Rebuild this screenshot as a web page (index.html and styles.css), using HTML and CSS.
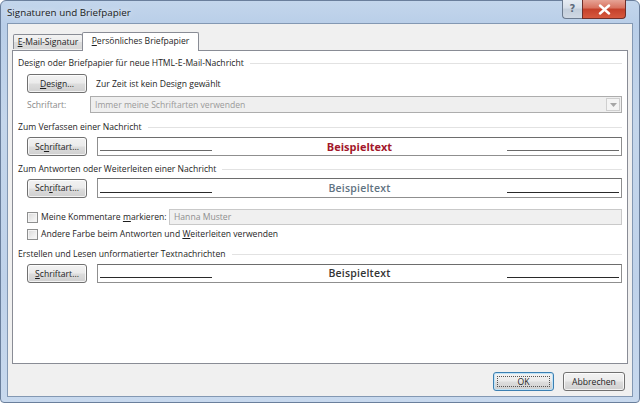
FILE: index.html
```html
<!DOCTYPE html>
<html lang="de">
<head>
<meta charset="utf-8">
<title>Signaturen und Briefpapier</title>
<link rel="stylesheet" href="styles.css">
</head>
<body>
<div class="window">
  <div class="titlebar">
    <span class="title">Signaturen und Briefpapier</span>
    <div class="caption-btns">
      <div class="cap-help">?</div>
      <div class="cap-close">
        <svg width="13" height="11" viewBox="0 0 13 11"><path d="M2 1.5 L11 9.5 M11 1.5 L2 9.5" stroke="#fff" stroke-width="2.4" stroke-linecap="round"/></svg>
      </div>
    </div>
  </div>
  <div class="client">
    <div class="tabs">
      <div class="tab"><u>E</u>-Mail-Signatur</div>
      <div class="tab active"><u>P</u>ersönliches Briefpapier</div>
    </div>
    <div class="panel">
      <div class="group-head g1">Design oder Briefpapier für neue HTML-E-Mail-Nachricht</div>
      <div class="row r-design">
        <div class="btn"><u>D</u>esign...</div>
        <span class="info">Zur Zeit ist kein Design gewählt</span>
      </div>
      <div class="row r-font">
        <span class="lbl-dis">Schriftart:</span>
        <div class="combo">
          <span>Immer meine Schriftarten verwenden</span>
          <div class="combo-arrow"><svg width="7" height="4" viewBox="0 0 7 4"><path d="M0 0 L7 0 L3.5 4 Z" fill="#a6a6a6"/></svg></div>
        </div>
      </div>
      <div class="group-head g2">Zum Verfassen einer Nachricht</div>
      <div class="row r-prev1">
        <div class="btn">Sc<u>h</u>riftart...</div>
        <div class="preview"><i class="pl"></i><span class="sample red">Beispieltext</span><i class="pl"></i></div>
      </div>
      <div class="group-head g3">Zum Antworten oder Weiterleiten einer Nachricht</div>
      <div class="row r-prev2">
        <div class="btn">Sch<u>r</u>iftart...</div>
        <div class="preview"><i class="pl dark"></i><span class="sample slate">Beispieltext</span><i class="pl dark"></i></div>
      </div>
      <div class="row r-check1">
        <span class="chk"></span>
        <span class="chk-lbl">Meine Kommentare <u>m</u>arkieren:</span>
        <div class="name-box">Hanna Muster</div>
      </div>
      <div class="row r-check2">
        <span class="chk"></span>
        <span class="chk-lbl">Andere Farbe beim Antworten und <u>W</u>eiterleiten verwenden</span>
      </div>
      <div class="group-head g4">Erstellen und Lesen unformatierter Textnachrichten</div>
      <div class="row r-prev3">
        <div class="btn"><u>S</u>chriftart...</div>
        <div class="preview"><i class="pl dark"></i><span class="sample plain">Beispieltext</span><i class="pl dark"></i></div>
      </div>
    </div>
    <div class="footer">
      <div class="btn btn-ok"><span class="focus">OK</span></div>
      <div class="btn btn-cancel">Abbrechen</div>
    </div>
  </div>
</div>
</body>
</html>
```
FILE: styles.css
```css
html, body {
  margin: 0;
  padding: 0;
}
body {
  width: 640px;
  height: 403px;
  overflow: hidden;
  background: #ffffff;
  font-family: "Open Sans", "Liberation Sans", sans-serif;
  font-size: 8.6px;
  color: #1e1e1e;
}
u { text-decoration: underline; text-underline-offset: 1px; }

.window {
  width: 640px;
  height: 403px;
  box-sizing: border-box;
  border: 1px solid #6a7f9c;
  border-radius: 6px 6px 4px 4px;
  background: linear-gradient(180deg, #c3d6ec 0%, #b9cee8 6%, #c4d6eb 30%, #bfd2ea 70%, #c8d9ee 100%);
  padding: 0 6px 5px 6px;
  display: flex;
  flex-direction: column;
}

.titlebar {
  height: 22px;
  flex: none;
  display: flex;
  align-items: center;
  position: relative;
}
.title {
  font-size: 9.8px;
  color: #1a1a1a;
  margin-top: 1px;
  text-shadow: 0 0 6px rgba(255,255,255,0.9);
}
.caption-btns {
  position: absolute;
  top: -1px;
  right: 7px;
  display: flex;
  height: 19px;
}
.cap-help {
  width: 19px;
  height: 18px;
  border: 1px solid #6b7a8e;
  border-top: none;
  border-right: none;
  border-radius: 0 0 0 4px;
  background: linear-gradient(180deg, #e6ecf3 0%, #d6dee8 45%, #c3cedb 50%, #cfd8e3 100%);
  color: #5d6b7c;
  font-family: "DejaVu Sans", sans-serif;
  font-size: 10px;
  font-weight: bold;
  text-align: center;
  line-height: 17px;
}
.cap-close {
  width: 42px;
  height: 18px;
  border: 1px solid #6e2f2a;
  border-top: none;
  border-radius: 0 0 4px 0;
  background: linear-gradient(180deg, #e6a395 0%, #d8715e 45%, #c4402a 50%, #d6593f 100%);
  display: flex;
  align-items: center;
  justify-content: center;
}

.client {
  flex: 1;
  background: #f0f0f0;
  border: 1px solid #8398b3;
  display: flex;
  flex-direction: column;
  padding: 8px 4px 5px 4px;
}

.tabs {
  height: 18px;
  display: flex;
  align-items: flex-end;
  padding-left: 1px;
  position: relative;
  z-index: 2;
}
.tab {
  height: 15px;
  width: 70px;
  box-sizing: border-box;
  border: 1px solid #898c95;
  border-bottom: none;
  border-radius: 2px 2px 0 0;
  background: linear-gradient(180deg, #f3f3f3 0%, #ebebeb 50%, #dddddd 51%, #d8d8d8 100%);
  text-align: center;
  line-height: 14px;
  margin-bottom: 1px;
}
.tab.active {
  width: 117px;
  height: 19px;
  margin-left: -1px;
  margin-bottom: -1px;
  background: #ffffff;
  line-height: 17px;
}

.panel {
  flex: 1;
  background: #ffffff;
  border: 1px solid #898c95;
  padding: 0 5px;
  display: flex;
  flex-direction: column;
}

.group-head {
  height: 13px;
  line-height: 13px;
  display: flex;
  align-items: center;
  white-space: nowrap;
}
.group-head::after {
  content: "";
  flex: 1;
  height: 1px;
  background: #e2e2e2;
  margin-left: 6px;
}
.g1 { margin-top: 6px; }
.g2 { margin-top: 8px; }
.g3 { margin-top: 7px; }
.g4 { margin-top: 7px; }

.row {
  display: flex;
  align-items: center;
  padding-left: 9px;
}
.r-design { margin-top: 4px; height: 19px; }
.r-font { margin-top: 3px; height: 17px; }
.r-prev1 { margin-top: 3px; height: 19px; }
.r-prev2 { margin-top: 2px; height: 20px; }
.r-check1 { margin-top: 11px; height: 16px; }
.r-check2 { margin-top: 2px; height: 14px; }
.r-prev3 { margin-top: 3px; height: 19px; }

.btn {
  width: 60px;
  height: 19px;
  box-sizing: border-box;
  border: 1px solid #707070;
  border-radius: 3px;
  background: linear-gradient(180deg, #f2f2f2 0%, #ebebeb 48%, #dddddd 52%, #cfcfcf 100%);
  box-shadow: inset 0 0 0 1px rgba(255,255,255,0.75);
  display: flex;
  align-items: center;
  justify-content: center;
  flex: none;
  color: #1e1e1e;
}
.info { margin-left: 9px; }

.lbl-dis {
  width: 63px;
  color: #8a8a8a;
  flex: none;
}
.combo {
  flex: 1;
  height: 17px;
  box-sizing: border-box;
  border: 1px solid #adadad;
  background: #efefef;
  display: flex;
  align-items: center;
  padding-left: 4px;
  color: #9a9a9a;
}
.combo span { flex: 1; }
.combo-arrow {
  width: 14px;
  height: 13px;
  box-sizing: border-box;
  border: 1px solid #cfcfcf;
  background: #f4f4f4;
  margin-right: 1px;
  display: flex;
  align-items: center;
  justify-content: center;
}

.preview {
  flex: 1;
  margin-left: 10px;
  height: 100%;
  box-sizing: border-box;
  border: 1px solid #8f8f8f;
  border-top-color: #6d6d6d;
  background: #ffffff;
  display: grid;
  grid-template-columns: 112px 1fr 112px;
  padding: 0 2px;
}
.pl {
  align-self: end;
  height: 1px;
  background: #6a6a6a;
  margin-bottom: 4px;
}
.pl.dark { background: #2a2a2a; }
.sample {
  text-align: center;
  align-self: center;
  font-family: "Open Sans", "Liberation Sans", sans-serif;
  font-size: 10.5px;
  letter-spacing: 0.2px;
  margin-top: -1px;
}
.sample.red { color: #a3172b; font-weight: 700; font-size: 11px; letter-spacing: 0; }
.sample.slate { color: #5f7382; font-weight: 600; }
.sample.plain { color: #333333; font-weight: 600; }

.chk {
  width: 11px;
  height: 11px;
  box-sizing: border-box;
  border: 1px solid #8e8f8f;
  background: linear-gradient(135deg, #d8d8d8 0%, #eeeeee 60%, #fafafa 100%);
  box-shadow: inset 0 0 0 1px #f4f4f4;
  flex: none;
}
.chk-lbl { margin-left: 3px; white-space: nowrap; }
.r-check1 .chk-lbl { width: 128px; flex: none; }
.name-box {
  flex: 1;
  height: 16px;
  box-sizing: border-box;
  border: 1px solid #c9c9c9;
  background: #f0f0f0;
  color: #8d8d8d;
  padding-left: 4px;
  display: flex;
  align-items: center;
}

.footer {
  margin-top: 8px;
  height: 19px;
  display: flex;
  justify-content: flex-end;
  gap: 9px;
  padding-right: 3px;
}
.btn-ok {
  width: 61px;
  border-color: #3c7fb1;
  box-shadow: inset 0 0 0 1px #bfe3f8;
}
.btn-ok .focus {
  width: 53px;
  height: 11px;
  box-sizing: border-box;
  border: 1px dotted #555;
  display: flex;
  align-items: center;
  justify-content: center;
}
.btn-cancel { width: 62px; }
```
